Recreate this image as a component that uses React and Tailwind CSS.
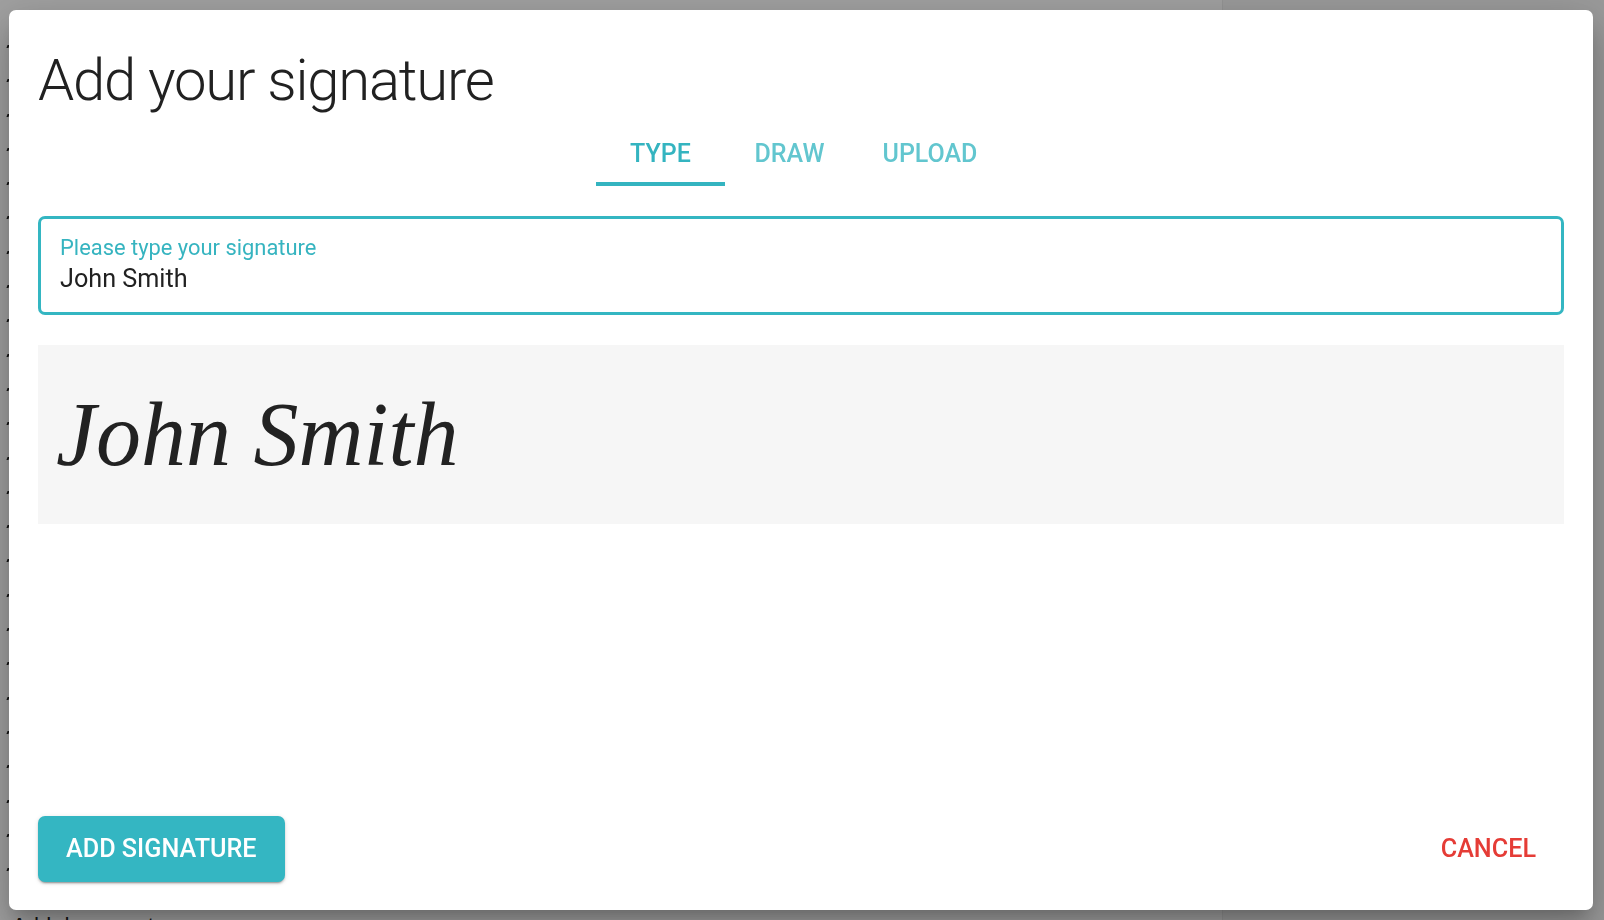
import React, { useState } from "react";

const tabs = [
  { key: "type", label: "TYPE", width: "w-[129px]" },
  { key: "draw", label: "DRAW", width: "w-[129px]" },
  { key: "upload", label: "UPLOAD", width: "w-[152px]" },
];

const SignatureDialog = () => {
  const [tab, setTab] = useState("type");
  const [name, setName] = useState("John Smith");

  return (
    <div className="fixed left-[9px] top-[10px] w-[1584px] h-[900px] rounded-[7px] bg-white shadow-[0_11px_15px_-7px_rgba(0,0,0,0.2),0_24px_38px_3px_rgba(0,0,0,0.14),0_9px_46px_8px_rgba(0,0,0,0.12)] flex flex-col px-[29px] font-['Roboto',sans-serif]">
      <h2 className="pt-[34px] text-[58px] leading-[72px] font-light tracking-[-1.2px] text-[#212121]">
        Add your signature
      </h2>

      {/* tabs */}
      <div className="flex justify-center">
        {tabs.map((t) => (
          <button
            key={t.key}
            onClick={() => setTab(t.key)}
            className={`${t.width} flex flex-col items-center pt-[23px] text-[25px] leading-[30px] font-medium ${
              tab === t.key ? "text-[#34b4c0]" : "text-[#62c6cf]"
            }`}
          >
            <span>{t.label}</span>
            <span
              className={`mt-[13px] h-[4px] w-full ${
                tab === t.key ? "bg-[#34b4c0]" : "bg-transparent"
              }`}
            ></span>
          </button>
        ))}
      </div>

      {/* input */}
      <div className="mt-[30px] border-[3px] border-[#34b6c2] rounded-[7px] pl-[19px] pt-[16px] pb-[16px]">
        <div className="text-[21.9px] leading-[26px] text-[#36b4c0]">
          Please type your signature
        </div>
        <input
          className="mt-[1px] w-full outline-none text-[25.2px] leading-[34px] text-[#212121] bg-transparent"
          value={name}
          onChange={(e) => setName(e.target.value)}
        />
      </div>

      {/* preview */}
      <div className="mt-[30px] h-[179px] bg-[#f6f6f6] flex items-center pl-[18px]">
        <span className="font-['Liberation_Serif',serif] italic text-[90px] leading-[100px] text-[#222222]">
          {name}
        </span>
      </div>

      <div className="flex-1"></div>

      <div className="flex justify-between items-center pb-[28px]">
        <button className="h-[66px] px-[28px] rounded-[7px] bg-[#34b6c2] text-white text-[25.2px] font-medium shadow-[0_3px_1px_-2px_rgba(0,0,0,0.2),0_2px_2px_0_rgba(0,0,0,0.14),0_1px_5px_0_rgba(0,0,0,0.12)]">
          ADD SIGNATURE
        </button>
        <button className="h-[66px] px-[28px] rounded-[7px] text-[#e53c36] text-[25.2px] font-medium">
          CANCEL
        </button>
      </div>
    </div>
  );
};

const App = () => {
  const marks = Array.from({ length: 25 }, (_, i) => i);
  return (
    <div className="relative h-[920px] w-full overflow-hidden bg-[#a1a1a1] flex">
      {/* page behind the backdrop */}
      <div className="w-[1222px] shrink-0 flex flex-col pt-[45px]">
        {marks.map((i) => (
          <div key={i} className="h-[34.3px] shrink-0">
            <span className="block ml-[7px] w-[2px] h-[3px] bg-[#111111] skew-x-[-20deg]"></span>
          </div>
        ))}
        <div className="shrink-0 mt-[11px] pl-[12px] text-[22px] leading-[26px] text-[#111111] font-['Liberation_Sans',sans-serif]">
          Add document
        </div>
      </div>
      <div className="flex-1 bg-[#9b9b9b] border-l border-[#949494]"></div>

      <SignatureDialog />
    </div>
  );
};

export default App;
